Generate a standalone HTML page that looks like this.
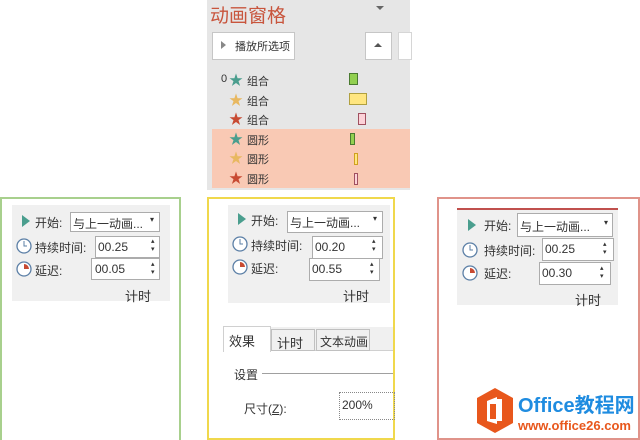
<!DOCTYPE html><html><head><meta charset="utf-8"><style>
*{margin:0;padding:0;box-sizing:border-box}
body{width:640px;height:440px;position:relative;background:#fff;font-family:"Liberation Sans","Noto Sans CJK SC",sans-serif;overflow:hidden;color:#333}
.a{position:absolute}
.t{font-size:12px;white-space:nowrap}
.box{position:absolute;background:#fff;border:1px solid #acacac}
.st{position:absolute;font-size:14px;line-height:14px}
.bar{position:absolute;border:1px solid}
</style></head><body>
<div class="a" style="left:207px;top:0;width:203px;height:190px;background:#e6e6e6"></div>
<div class="a" style="left:210px;top:1px;font-size:19px;color:#c8553d">动画窗格</div>
<div class="a" style="left:376px;top:6px;width:0;height:0;border-left:4px solid transparent;border-right:4px solid transparent;border-top:4px solid #666"></div>
<div class="box" style="left:212px;top:32px;width:83px;height:28px;border-color:#c6c6c6"></div>
<div class="a" style="left:221px;top:41px;border-left:5px solid #888;border-top:4px solid transparent;border-bottom:4px solid transparent"></div>
<div class="a t" style="left:235px;top:38px;font-size:11px">播放所选项</div>
<div class="box" style="left:365px;top:32px;width:27px;height:28px;border-color:#c6c6c6"></div>
<div class="a" style="left:374px;top:43px;border-bottom:4px solid #555;border-left:4px solid transparent;border-right:4px solid transparent"></div>
<div class="box" style="left:398px;top:32px;width:14px;height:28px;border-color:#d6d6d6"></div>
<div class="a" style="left:212px;top:129px;width:198px;height:59px;background:#f9c9b4"></div>
<div class="a t" style="left:221px;top:73px;font-size:11px">0</div>
<div class="st" style="left:229px;top:73px;color:#4a9e8e">★</div><div class="a t" style="left:247px;top:73px;font-size:11px">组合</div>
<div class="st" style="left:229px;top:93px;color:#e8b860">★</div><div class="a t" style="left:247px;top:93px;font-size:11px">组合</div>
<div class="st" style="left:229px;top:112px;color:#c84a32">★</div><div class="a t" style="left:247px;top:112px;font-size:11px">组合</div>
<div class="st" style="left:229px;top:132px;color:#4a9e8e">★</div><div class="a t" style="left:247px;top:132px;font-size:11px">圆形</div>
<div class="st" style="left:229px;top:151px;color:#e8b860">★</div><div class="a t" style="left:247px;top:151px;font-size:11px">圆形</div>
<div class="st" style="left:229px;top:171px;color:#c84a32">★</div><div class="a t" style="left:247px;top:171px;font-size:11px">圆形</div>
<div class="bar" style="left:349px;top:73px;width:9px;height:12px;background:#92d050;border-color:#4a7a30"></div>
<div class="bar" style="left:349px;top:93px;width:18px;height:12px;background:#ffe680;border-color:#b0a040"></div>
<div class="bar" style="left:358px;top:113px;width:8px;height:12px;background:#fcd2d8;border-color:#a05060"></div>
<div class="bar" style="left:350px;top:133px;width:5px;height:12px;background:#92d050;border-color:#4a7a30"></div>
<div class="bar" style="left:354px;top:153px;width:4px;height:12px;background:#ffe680;border-color:#d0a020"></div>
<div class="bar" style="left:354px;top:173px;width:4px;height:12px;background:#fcd2d8;border-color:#a05060"></div>

<div class="a" style="left:0;top:197px;width:181px;height:243px;border:2px solid #a8d08d;border-bottom:none"></div>
<div class="a" style="left:207px;top:197px;width:188px;height:243px;border:2px solid #f0d84c"></div>
<div class="a" style="left:437px;top:197px;width:203px;height:243px;border:2px solid #e0938a"></div>

<div class="a" style="left:12px;top:205px;width:158px;height:96px;background:#f0f0f0"></div>
<div class="a" style="left:228px;top:205px;width:162px;height:98px;background:#f0f0f0"></div>
<div class="a" style="left:457px;top:208px;width:161px;height:97px;background:#f0f0f0"></div>
<div class="a" style="left:457px;top:208px;width:161px;height:2px;background:#c0504d"></div>

<svg class="a" style="left:0;top:0" width="640" height="440">
<g>
<polygon points="22,215 22,227 30,221" fill="#4a9e8e"/>
<circle cx="24" cy="246" r="7" fill="#fff" stroke="#5b7fa6" stroke-width="1.3"/><path d="M24 241v5h3" stroke="#5b7fa6" fill="none"/>
<circle cx="24" cy="269" r="7" fill="#fff" stroke="#5b7fa6" stroke-width="1.3"/><path d="M24 269v-5a5 5 0 0 1 5 5z" fill="#c84a32"/>
</g>
<g transform="translate(216,-2)">
<polygon points="22,215 22,227 30,221" fill="#4a9e8e"/>
<circle cx="24" cy="246" r="7" fill="#fff" stroke="#5b7fa6" stroke-width="1.3"/><path d="M24 241v5h3" stroke="#5b7fa6" fill="none"/>
<circle cx="24" cy="269" r="7" fill="#fff" stroke="#5b7fa6" stroke-width="1.3"/><path d="M24 269v-5a5 5 0 0 1 5 5z" fill="#c84a32"/>
</g>
<g transform="translate(446,4)">
<polygon points="22,215 22,227 30,221" fill="#4a9e8e"/>
<circle cx="24" cy="246" r="7" fill="#fff" stroke="#5b7fa6" stroke-width="1.3"/><path d="M24 241v5h3" stroke="#5b7fa6" fill="none"/>
<circle cx="24" cy="269" r="7" fill="#fff" stroke="#5b7fa6" stroke-width="1.3"/><path d="M24 269v-5a5 5 0 0 1 5 5z" fill="#c84a32"/>
</g>
<polygon points="495,388 513,398 513,423 495,433 477,423 477,398" fill="#e8571c"/>
<path d="M487 401l10-4v27l-10-3z" fill="#fff"/><path d="M490 404h6v15h-6z" fill="#e8571c"/><path d="M497 399h5v22h-5z" fill="#fff"/>
</svg>

<div class="a t" style="left:35px;top:214px">开始:</div>
<div class="box" style="left:70px;top:212px;width:90px;height:20px"></div><div class="a t" style="left:73px;top:215px">与上一动画...</div><div class="a t" style="left:150px;top:215px;font-size:8px">▾</div>
<div class="a t" style="left:35px;top:239px">持续时间:</div>
<div class="box" style="left:95px;top:236px;width:65px;height:22px"></div><div class="a t" style="left:98px;top:240px">00.25</div><div class="a t" style="left:151px;top:238px;font-size:7px;line-height:8px">▴<br>▾</div>
<div class="a t" style="left:35px;top:262px">延迟:</div>
<div class="box" style="left:91px;top:258px;width:69px;height:22px"></div><div class="a t" style="left:95px;top:262px">00.05</div><div class="a t" style="left:151px;top:261px;font-size:7px;line-height:8px">▴<br>▾</div>
<div class="a t" style="left:125px;top:286px;font-size:13px">计时</div>

<div class="a t" style="left:251px;top:212px">开始:</div>
<div class="box" style="left:287px;top:211px;width:96px;height:22px"></div><div class="a t" style="left:290px;top:214px">与上一动画...</div><div class="a t" style="left:373px;top:214px;font-size:8px">▾</div>
<div class="a t" style="left:251px;top:237px">持续时间:</div>
<div class="box" style="left:312px;top:236px;width:71px;height:23px"></div><div class="a t" style="left:315px;top:240px">00.20</div><div class="a t" style="left:372px;top:238px;font-size:7px;line-height:8px">▴<br>▾</div>
<div class="a t" style="left:251px;top:260px">延迟:</div>
<div class="box" style="left:309px;top:258px;width:71px;height:23px"></div><div class="a t" style="left:312px;top:262px">00.55</div><div class="a t" style="left:370px;top:261px;font-size:7px;line-height:8px">▴<br>▾</div>
<div class="a t" style="left:343px;top:286px;font-size:13px">计时</div>
<div class="a" style="left:223px;top:327px;width:170px;height:24px;background:#f0f0f0;border-bottom:1px solid #d0d0d0"></div>
<div class="a" style="left:223px;top:326px;width:48px;height:26px;background:#fff;border:1px solid #d0d0d0;border-bottom:none"></div>
<div class="a t" style="left:229px;top:331px;font-size:13px">效果</div>
<div class="a" style="left:271px;top:329px;width:44px;height:22px;border:1px solid #c0c0c0"></div><div class="a t" style="left:277px;top:333px;font-size:13px">计时</div>
<div class="a" style="left:316px;top:329px;width:54px;height:22px;border:1px solid #c0c0c0"></div><div class="a t" style="left:320px;top:333px">文本动画</div>
<div class="a t" style="left:234px;top:366px">设置</div>
<div class="a" style="left:262px;top:373px;width:131px;height:1px;background:#a0a0a0"></div>
<div class="a t" style="left:244px;top:400px">尺寸(<u>Z</u>):</div>
<div class="a" style="left:339px;top:392px;width:56px;height:28px;border:1px dotted #888"></div><div class="a t" style="left:342px;top:398px">200%</div>

<div class="a t" style="left:484px;top:217px">开始:</div>
<div class="box" style="left:517px;top:213px;width:96px;height:24px"></div><div class="a t" style="left:520px;top:218px">与上一动画...</div><div class="a t" style="left:604px;top:218px;font-size:8px">▾</div>
<div class="a t" style="left:484px;top:242px">持续时间:</div>
<div class="box" style="left:542px;top:238px;width:72px;height:23px"></div><div class="a t" style="left:545px;top:242px">00.25</div><div class="a t" style="left:603px;top:241px;font-size:7px;line-height:8px">▴<br>▾</div>
<div class="a t" style="left:484px;top:265px">延迟:</div>
<div class="box" style="left:539px;top:262px;width:72px;height:23px"></div><div class="a t" style="left:542px;top:266px">00.30</div><div class="a t" style="left:600px;top:265px;font-size:7px;line-height:8px">▴<br>▾</div>
<div class="a t" style="left:575px;top:290px;font-size:13px">计时</div>

<div class="a" style="left:518px;top:394px;font-size:20px;font-weight:bold;color:#1f8ce0;white-space:nowrap;line-height:24px">Office教程网</div>
<div class="a" style="left:518px;top:418px;font-size:13px;font-weight:bold;color:#e8571c;white-space:nowrap;line-height:16px">www.office26.com</div>
</body></html>
